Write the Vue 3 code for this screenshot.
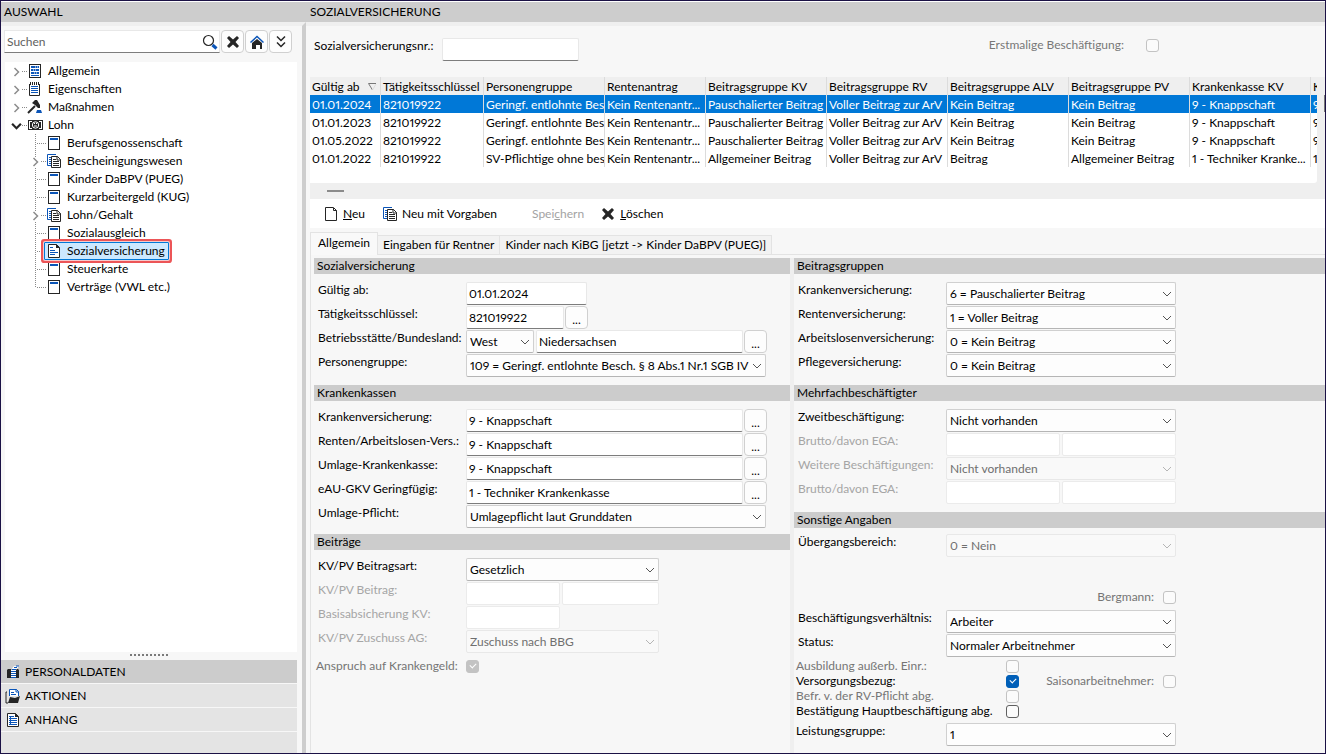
<template>
  <svg class="a-sprite" aria-hidden="true">
    <symbol id="i-page" viewBox="0 0 16 16">
      <rect x="2.5" y="1.5" width="11" height="13" fill="#fff" stroke="#252525" />
      <rect x="4" y="3" width="8" height="2" fill="#0b55b8" />
    </symbol>
    <symbol id="i-list" viewBox="0 0 16 16">
      <rect x="2.5" y="1.5" width="11" height="13" fill="#fff" stroke="#252525" />
      <path d="M4 4h8M4 7h8M4 10h8" stroke="#0b55b8" stroke-width="2" />
      <path d="M4 12.500h8" stroke="#0b55b8" />
      <path d="M8 4h1M10 4h1M6 7h1M8 7h1M7 10h1M9 10h1" stroke="#fff" />
    </symbol>
    <symbol id="i-notepad" viewBox="0 0 16 16">
      <path d="M2.500 3v11.500h10V3" fill="#fff" stroke="#252525" />
      <path d="M3.500 1v3M5.500 1v3M7.500 1v3M9.500 1v3M11.500 1v3" stroke="#252525" />
      <path d="M4 5.500h7M4 7.500h7M4 9.500h7M4 11.500h7" stroke="#0b55b8" />
    </symbol>
    <symbol id="i-gavel" viewBox="0 0 16 16">
      <path d="M1 14L8 7" stroke="#252525" stroke-width="2" />
      <path d="M5 4l3-3h2l3 5v3h-2L8 6z" fill="#252525" />
      <path d="M10 11h4l1 3H9z" fill="#0b55b8" />
    </symbol>
    <symbol id="i-money" viewBox="0 0 16 16">
      <rect x="1" y="3" width="15" height="10" fill="#252525" />
      <path d="M2 4h3v1H3v6h2v1H2zM15 4h-3v1h2v6h-2v1h3z" fill="#fff" />
      <circle cx="8.500" cy="8" r="3.200" fill="#252525" stroke="#fff" />
      <path d="M7 6.500h1M9 6.500h1M7 9h3" fill="none" stroke="#fff" />
    </symbol>
    <symbol id="i-copy" viewBox="0 0 16 16">
      <path d="M10 1.500H1.500v11H5" fill="#fff" stroke="#0b55b8" />
      <path d="M3 4.500h3M3 6.500h2M3 8.500h2M3 10.500h2" stroke="#0b55b8" />
      <path d="M5.500 3.500h6l3 3v8h-9z" fill="#fff" stroke="#252525" />
      <path d="M11 3v4h4M7 6.500h3M7 8.500h6M7 10.500h6M7 12.500h6" fill="none" stroke="#252525" />
    </symbol>
    <symbol id="i-doc" viewBox="0 0 16 16">
      <path d="M2.500 1.500h8l3 3v10h-11z" fill="#fff" stroke="#252525" />
      <path d="M10 1v4h4z" fill="#252525" />
      <path d="M4 4.500h3M4 7.500h5M4 9.500h8M4 11.500h5" stroke="#0b55b8" />
    </symbol>
    <symbol id="i-new" viewBox="0 0 16 16">
      <path d="M2.500 1.500h8l3 3v10h-11zM10.500 2v2.500h3" fill="#fff" stroke="#252525" />
    </symbol>
    <symbol id="i-attach" viewBox="0 0 16 16">
      <path d="M2.500 1.500h8l3 3v10h-11z" fill="#fff" stroke="#252525" />
      <path d="M10 1v4h4z" fill="#252525" />
      <path d="M5.500 4v9M4 4.500h5M4 6.500h8M4 8.500h8M4 10.500h8M4 12.500h8" stroke="#0b55b8" />
    </symbol>
    <symbol id="i-person" viewBox="0 0 16 16">
      <path d="M2 6l1-1h10l1 1v8H2z" fill="#252525" />
      <path d="M6 6l3-4h5l-3 4v8H6z" fill="#fff" />
      <path d="M9 3.500h3M11 2h3M7 5.500h4M6 7.500h5M6 9.500h5M6 11.500h5M6 13.500h5" stroke="#0b55b8" />
    </symbol>
    <symbol id="i-folder" viewBox="0 0 16 16">
      <path d="M2 4H1v11h2" fill="none" stroke="#252525" />
      <path d="M4.500 8V1.500h7l2 2V8" fill="#fff" stroke="#0b55b8" />
      <path d="M11 1v3h3M6 4.500h3M6 6.500h5" fill="none" stroke="#0b55b8" />
      <path d="M3 15l2-6 5 1 5-2-2 7z" fill="#252525" />
    </symbol>
    <symbol id="i-cross" viewBox="0 0 16 16">
      <path d="M2 4l2-2 4 3.500L12 2l2 2-3.500 4L14 12l-2 2-4-3.500L4 14l-2-2 3.500-4z" fill="#252525" />
    </symbol>
    <symbol id="i-search" viewBox="0 0 16 16">
      <circle cx="6.500" cy="6.500" r="5" fill="none" stroke="#252525" stroke-width="1.200" />
      <path d="M10.500 11l4 3.500" stroke="#0b55b8" stroke-width="3" />
    </symbol>
    <symbol id="i-home" viewBox="0 0 16 16">
      <path d="M3 9l5-4 5 4v6h-2v-4H7v4H3z" fill="#252525" />
      <path d="M1.500 8.500L8 2.500l6.500 6" fill="none" stroke="#0b55b8" stroke-width="1.500" />
      <path d="M8 11h2v4H8z" fill="#fff" />
    </symbol>
    <symbol id="i-down2" viewBox="0 0 16 16">
      <path d="M4 2.500L8 6.500l4-4M4 8.500l4 4 4-4" fill="none" stroke="#252525" stroke-width="1.500" />
    </symbol>
    <symbol id="i-right" viewBox="0 0 8 10">
      <path d="M2 1l4 4-4 4" fill="none" stroke="#8c8c8c" stroke-width="1.500" />
    </symbol>
    <symbol id="i-chevron" viewBox="0 0 10 6">
      <path d="M1 1l4 4 4-4" fill="none" stroke="currentColor" />
    </symbol>
  </svg>

  <div class="app">
    <header class="app__bar">
      <h2 class="app__title app__title--side">AUSWAHL</h2>
      <h1 class="app__title">SOZIALVERSICHERUNG</h1>
    </header>

    <div class="app__body">
      <aside class="side">
        <div class="side__search">
          <div class="side__box">
            <input v-model="query" type="text" class="side__input" placeholder="Suchen" aria-label="Suchen" />
            <svg class="icon side__glass"><use href="#i-search" /></svg>
          </div>
          <button class="btn" aria-label="Suche leeren" @click="query = ''"><svg class="icon"><use href="#i-cross" /></svg></button>
          <button class="btn" aria-label="Startseite"><svg class="icon"><use href="#i-home" /></svg></button>
          <button class="btn" aria-label="Alles aufklappen"><svg class="icon"><use href="#i-down2" /></svg></button>
        </div>

        <ul class="tree">
          <li
            v-for="(node, i) in tree"
            :key="node.label"
            class="tree__row"
            :class="{ 'tree__row--child': node.child, 'tree__row--last': i === tree.length - 1 }"
          >
            <span class="tree__branch">
              <svg v-if="node.state === 'closed'" class="tree__arrow"><use href="#i-right" /></svg>
              <svg v-if="node.state === 'open'" class="tree__arrow tree__arrow--open"><use href="#i-chevron" /></svg>
            </span>
            <button
              class="tree__item"
              :class="{ 'tree__item--active': node.label === selected }"
              @click="selected = node.label"
            >
              <svg class="icon"><use :href="'#i-' + node.icon" /></svg>
              {{ node.label }}
            </button>
          </li>
        </ul>

        <div class="side__grip"></div>
        <nav class="nav">
          <button v-for="item in nav" :key="item.label" class="nav__item" :class="{ 'nav__item--active': item.active }">
            <svg class="icon"><use :href="'#i-' + item.icon" /></svg>
            {{ item.label }}
          </button>
          <div class="nav__rest"></div>
        </nav>
      </aside>

      <main class="main">
        <div class="top">
          <label for="svnr" class="top__label">Sozialversicherungsnr.:</label>
          <input id="svnr" type="text" class="field w-137" />
          <label for="erst" class="top__first">Erstmalige Beschäftigung:</label>
          <input id="erst" type="checkbox" class="check" disabled />
        </div>

        <div class="list">
          <div class="list__view">
            <table class="grid">
              <colgroup>
                <col v-for="(c, i) in columns" :key="i" :class="'grid__col--' + c.size" />
              </colgroup>
              <thead>
                <tr>
                  <th v-for="(c, i) in columns" :key="i">
                    {{ c.title }}
                    <svg v-if="i === 0" class="grid__sort" viewBox="0 0 9 8">
                      <path d="M8 .5H.5L4.500 7" fill="none" stroke="#777" />
                      <path d="M8 1L4.500 7" stroke="#ddd" />
                    </svg>
                  </th>
                </tr>
              </thead>
              <tbody>
                <tr v-for="(row, r) in rows" :key="r" :class="{ 'grid__row--active': r === 0 }">
                  <td v-for="(cell, i) in row" :key="i">{{ cell }}</td>
                </tr>
              </tbody>
            </table>
          </div>
          <div class="list__vscroll"><span class="list__vthumb"></span></div>
        </div>
        <div class="list__hscroll"><span class="list__hthumb"></span></div>

        <div class="tools">
          <button class="tools__btn tools__btn--new"><svg class="icon"><use href="#i-new" /></svg><span><u>N</u>eu</span></button>
          <button class="tools__btn tools__btn--copy"><svg class="icon"><use href="#i-copy" /></svg><span>Neu mit Vorgaben</span></button>
          <button class="tools__btn tools__btn--save" disabled><span>Spei<u>c</u>hern</span></button>
          <button class="tools__btn"><svg class="icon"><use href="#i-cross" /></svg><span><u>L</u>öschen</span></button>
        </div>

        <div class="tabs" role="tablist">
          <button
            v-for="tab in tabs"
            :key="tab"
            role="tab"
            class="tabs__tab"
            :class="{ 'tabs__tab--active': tab === activeTab }"
            :aria-selected="tab === activeTab"
            @click="activeTab = tab"
          >{{ tab }}</button>
        </div>

        <div class="panel">
          <div v-for="(column, c) in form" :key="c" class="panel__col">
            <section v-for="(sec, s) in column" :key="sec.title" class="sec" :class="sec.mod && 'sec--' + sec.mod">
              <h3 class="sec__title">{{ sec.title }}</h3>
              <div class="sec__body">
                <div
                  v-for="(row, r) in sec.rows"
                  :key="r"
                  class="row"
                  :class="{ 'row--off': row.off, 'row--check': row.checks, 'row--lead': row.lead, 'row--gap': row.gap, 'row--flush': row.flush }"
                >
                  <template v-if="row.checks">
                    <template v-for="(k, n) in row.checks" :key="k.label">
                      <label
                        :for="`f${c}${s}${r}${n}`"
                        class="row__check"
                        :class="{ 'row__check--off': k.off, 'row__check--wide': k.wide, 'row__check--end': k.end, 'row__check--short': k.short }"
                      >{{ k.label }}</label>
                      <input :id="`f${c}${s}${r}${n}`" type="checkbox" class="check" :checked="k.on" :disabled="k.off" />
                    </template>
                  </template>
                  <template v-else>
                    <label :for="`f${c}${s}${r}0`" class="row__label">{{ row.label }}</label>
                    <template v-for="(f, n) in row.fields" :key="n">
                      <div v-if="f.type === 'select'" class="pick" :class="'w-' + f.w">
                        <select :id="`f${c}${s}${r}${n}`" class="pick__select" :disabled="row.off || f.off" :aria-label="row.label">
                          <option>{{ f.value }}</option>
                        </select>
                        <svg class="pick__arrow"><use href="#i-chevron" /></svg>
                      </div>
                      <button v-else-if="f.type === 'more'" class="btn btn--more">...</button>
                      <input
                        v-else
                        :id="`f${c}${s}${r}${n}`"
                        type="text"
                        class="field"
                        :class="'w-' + f.w"
                        :value="f.value"
                        :disabled="row.off"
                        :aria-label="row.label"
                      />
                    </template>
                  </template>
                </div>
              </div>
            </section>
          </div>
        </div>
      </main>
    </div>
  </div>
</template>

<script setup>
import { ref } from "vue";

const query = ref("");
const selected = ref("Sozialversicherung");

const tree = [
  { label: "Allgemein", icon: "list", state: "closed" },
  { label: "Eigenschaften", icon: "notepad", state: "closed" },
  { label: "Maßnahmen", icon: "gavel", state: "closed" },
  { label: "Lohn", icon: "money", state: "open" },
  { label: "Berufsgenossenschaft", icon: "page", child: true },
  { label: "Bescheinigungswesen", icon: "copy", child: true, state: "closed" },
  { label: "Kinder DaBPV (PUEG)", icon: "page", child: true },
  { label: "Kurzarbeitergeld (KUG)", icon: "page", child: true },
  { label: "Lohn/Gehalt", icon: "copy", child: true, state: "closed" },
  { label: "Sozialausgleich", icon: "page", child: true },
  { label: "Sozialversicherung", icon: "doc", child: true },
  { label: "Steuerkarte", icon: "page", child: true },
  { label: "Verträge (VWL etc.)", icon: "page", child: true },
];

const nav = [
  { label: "PERSONALDATEN", icon: "person", active: true },
  { label: "AKTIONEN", icon: "folder" },
  { label: "ANHANG", icon: "attach" },
];

const columns = [
  { title: "Gültig ab", size: "date" },
  { title: "Tätigkeitsschlüssel", size: "key" },
  { title: "Personengruppe", size: "base" },
  { title: "Rentenantrag", size: "short" },
  { title: "Beitragsgruppe KV", size: "base" },
  { title: "Beitragsgruppe RV", size: "base" },
  { title: "Beitragsgruppe ALV", size: "base" },
  { title: "Beitragsgruppe PV", size: "base" },
  { title: "Krankenkasse KV", size: "base" },
  { title: "K", size: "rest" },
];

const mini = ["Geringf. entlohnte Bes", "Kein Rentenantr...", "Pauschalierter Beitrag", "Voller Beitrag zur ArV", "Kein Beitrag", "Kein Beitrag", "9 - Knappschaft", "9"];
const rows = [
  ["01.01.2024", "821019922", ...mini],
  ["01.01.2023", "821019922", ...mini],
  ["01.05.2022", "821019922", ...mini],
  ["01.01.2022", "821019922", "SV-Pflichtige ohne bes", "Kein Rentenantr...", "Allgemeiner Beitrag", "Voller Beitrag zur ArV", "Beitrag", "Allgemeiner Beitrag", "1 - Techniker Kranke...", "1"],
];

const tabs = ["Allgemein", "Eingaben für Rentner", "Kinder nach KiBG [jetzt -> Kinder DaBPV (PUEG)]"];
const activeTab = ref(tabs[0]);

const text = (w, value = "") => ({ type: "text", w, value });
const select = (w, value, off = false) => ({ type: "select", w, value, off });
const more = { type: "more" };

const form = [
  [
    {
      title: "Sozialversicherung",
      rows: [
        { label: "Gültig ab:", fields: [text(121, "01.01.2024")] },
        { label: "Tätigkeitsschlüssel:", fields: [text(98, "821019922"), more] },
        { label: "Betriebsstätte/Bundesland:", fields: [select(68, "West"), text(207, "Niedersachsen"), more] },
        { label: "Personengruppe:", fields: [select(300, "109 = Geringf. entlohnte Besch. § 8 Abs.1 Nr.1 SGB IV")] },
      ],
    },
    {
      title: "Krankenkassen",
      mod: "tight",
      rows: [
        { label: "Krankenversicherung:", fields: [text(277, "9 - Knappschaft"), more] },
        { label: "Renten/Arbeitslosen-Vers.:", fields: [text(277, "9 - Knappschaft"), more] },
        { label: "Umlage-Krankenkasse:", fields: [text(277, "9 - Knappschaft"), more] },
        { label: "eAU-GKV Geringfügig:", fields: [text(277, "1 - Techniker Krankenkasse"), more] },
        { label: "Umlage-Pflicht:", fields: [select(300, "Umlagepflicht laut Grunddaten")] },
      ],
    },
    {
      title: "Beiträge",
      rows: [
        { label: "KV/PV Beitragsart:", fields: [select(193, "Gesetzlich")] },
        { label: "KV/PV Beitrag:", off: true, fields: [text(94), text(97)] },
        { label: "Basisabsicherung KV:", off: true, fields: [text(94)] },
        { label: "KV/PV Zuschuss AG:", off: true, fields: [select(193, "Zuschuss nach BBG")] },
        { gap: true, checks: [{ label: "Anspruch auf Krankengeld:", on: true, off: true, short: true }] },
      ],
    },
  ],
  [
    {
      title: "Beitragsgruppen",
      rows: [
        { label: "Krankenversicherung:", fields: [select(230, "6 = Pauschalierter Beitrag")] },
        { label: "Rentenversicherung:", fields: [select(230, "1 = Voller Beitrag")] },
        { label: "Arbeitslosenversicherung:", fields: [select(230, "0 = Kein Beitrag")] },
        { label: "Pflegeversicherung:", fields: [select(230, "0 = Kein Beitrag")] },
      ],
    },
    {
      title: "Mehrfachbeschäftigter",
      rows: [
        { label: "Zweitbeschäftigung:", fields: [select(230, "Nicht vorhanden")] },
        { label: "Brutto/davon EGA:", off: true, fields: [text(114), text(114)] },
        { label: "Weitere Beschäftigungen:", off: true, fields: [select(230, "Nicht vorhanden")] },
        { label: "Brutto/davon EGA:", off: true, fields: [text(114), text(114)] },
      ],
    },
    {
      title: "Sonstige Angaben",
      mod: "misc",
      rows: [
        { label: "Übergangsbereich:", fields: [select(230, "0 = Nein", true)] },
        { gap: true, checks: [{ label: "Bergmann:", off: true, end: true }] },
        { label: "Beschäftigungsverhältnis:", gap: true, fields: [select(230, "Arbeiter")] },
        { label: "Status:", fields: [select(230, "Normaler Arbeitnehmer")] },
        { lead: true, checks: [{ label: "Ausbildung außerb. Einr.:", off: true, wide: true }] },
        { checks: [{ label: "Versorgungsbezug:", on: true, wide: true }, { label: "Saisonarbeitnehmer:", off: true, end: true }] },
        { checks: [{ label: "Befr. v. der RV-Pflicht abg.", off: true, wide: true }] },
        { checks: [{ label: "Bestätigung Hauptbeschäftigung abg.", wide: true }] },
        { label: "Leistungsgruppe:", flush: true, fields: [select(230, "1")] },
      ],
    },
  ],
];
</script>

<style>
body {
  background: #f7f7f7;
}
</style>

<style scoped>
.a-sprite {
  position: absolute;
  width: 0;
  height: 0;
}

.app,
.app *,
.app *::before,
.app *::after {
  box-sizing: border-box;
}

.app {
  display: flex;
  flex-direction: column;
  min-height: 100vh;
  border: 1px solid #1b1145;
  background: #f7f7f7;
  color: #000;
  font-family: Lato, "Open Sans", sans-serif;
  font-size: 12px;
  font-variant-numeric: proportional-nums;
  line-height: 16px;
}

button,
input,
select {
  margin: 0;
  font: inherit;
  font-variant-numeric: inherit;
  color: inherit;
}

.icon {
  flex: none;
  width: 16px;
  height: 16px;
}

/* KOPFZEILE */
.app__bar {
  display: flex;
  align-items: center;
  height: 21px;
  border-top: 1px solid #fff;
  background: #cdcdcd;
}

.app__title {
  margin: 0;
  padding-left: 4px;
  font-size: 12px;
  font-weight: 400;
}

.app__title--side {
  width: 305px;
  padding-left: 3px;
}

.app__body {
  display: flex;
  flex: 1;
}

/* SEITENLEISTE */
.side {
  display: flex;
  flex-direction: column;
  flex: none;
  width: 305px;
  padding-right: 5px;
  border-right: 4px solid #cdcdcd;
  border-top: 4px solid #efefef;
}

.side__search {
  display: flex;
  gap: 1px;
  padding: 4px 5px 9px 3px;
}

.side__box {
  display: flex;
  align-items: center;
  flex: 1;
  height: 23px;
  padding-right: 1px;
  border: 1px solid #e8e8e8;
  border-bottom-color: #7d7d7d;
  background: #fff;
}

.side__input {
  flex: 1;
  min-width: 0;
  padding: 0 2px;
  border: 0;
  outline: 0;
  background: none;
}

.side__input::placeholder {
  color: #5f5f5f;
}

.btn {
  display: flex;
  align-items: center;
  justify-content: center;
  flex: none;
  width: 23px;
  height: 23px;
  padding: 0;
  border: 1px solid #d0d0d0;
  border-radius: 4px;
  background: #fdfdfd;
}

.btn--more {
  padding-top: 4px;
}

.tree {
  flex: 1;
  margin: 0 0 0 4px;
  padding: 0;
  background: #fff;
  list-style: none;
}

.tree__row {
  display: flex;
  height: 18px;
  padding-left: 3px;
}

.tree__row--child {
  padding-left: 22px;
}

.tree__branch {
  position: relative;
  display: flex;
  align-items: center;
  width: 17px;
  padding-left: 3px;
}

.tree__row--child .tree__branch::before {
  content: "";
  position: absolute;
  left: 8px;
  top: 0;
  width: 1px;
  height: 100%;
  background: repeating-linear-gradient(#8a8a8a 0 1px, transparent 1px 2px);
}

.tree__row--last .tree__branch::before {
  height: 50%;
}

.tree__branch::after {
  content: "";
  position: absolute;
  left: 9px;
  right: -3px;
  top: 9px;
  height: 1px;
  background: repeating-linear-gradient(90deg, transparent 0 1px, #8a8a8a 1px 2px);
}

.tree__arrow {
  position: relative;
  z-index: 1;
  width: 11px;
  height: 10px;
  margin-top: 2px;
  background: #fff;
}

.tree__arrow--open {
  color: #252525;
  stroke-width: 2;
}

.tree__item {
  display: flex;
  align-items: center;
  gap: 5px;
  padding: 0 3px 0 1px;
  border: 1px solid transparent;
  background: none;
  white-space: nowrap;
}

.tree__item--active {
  position: relative;
  z-index: 2;
  border-color: #0078d7;
  border-radius: 1px;
  background: #cce8ff;
  box-shadow: 0 0 0 1px #f6c9cc, 0 0 0 3px #ec5557;
}

.side__grip {
  width: 39px;
  height: 2px;
  margin: 2px auto 4px;
  background: repeating-linear-gradient(90deg, #7a7a7a 0 2px, transparent 2px 4px);
}

.nav {
  display: flex;
  flex-direction: column;
  gap: 1px;
}

.nav__item {
  display: flex;
  align-items: center;
  gap: 4px;
  height: 23px;
  padding: 0 4px;
  border: 0;
  background: #e4e4e4;
}

.nav__item--active {
  background: #cccccc;
}

.nav__rest {
  height: 21px;
  background: #e4e4e4;
}

/* HAUPTBEREICH */
.main {
  display: flex;
  flex-direction: column;
  flex: 1;
  min-width: 0;
  padding-left: 4px;
  border-top: 4px solid #efefef;
}

.top {
  display: flex;
  align-items: center;
  height: 51px;
  padding: 0 166px 5px 4px;
}

.top__label {
  width: 128px;
  padding-bottom: 6px;
  white-space: nowrap;
}

.top__first {
  margin-left: auto;
  padding: 0 22px 8px 0;
  color: #777;
}

.top__first + .check {
  margin-bottom: 8px;
}

.field {
  flex: none;
  height: 23px;
  padding: 0 2px;
  border: 1px solid #e8e8e8;
  border-bottom-color: #7d7d7d;
  border-radius: 2px;
  background: #fff;
}

.field:disabled {
  border-color: #ebebeb;
}

.list {
  display: flex;
  background: #efefef;
}

.list__view {
  flex: 1;
  min-width: 0;
  height: 106px;
  overflow: hidden;
  border-radius: 0 0 3px 0;
  background: #fff;
}

.list__vscroll {
  width: 8px;
  padding-top: 18px;
}

.list__vthumb {
  display: block;
  width: 1px;
  height: 17px;
  margin-left: auto;
  background: #777;
}

.list__hscroll {
  height: 16px;
  padding: 7px 17px;
  background: #efefef;
}

.list__hthumb {
  display: block;
  width: 17px;
  height: 2px;
  background: #8b8b8b;
}

.grid {
  width: 100%;
  table-layout: fixed;
  border-collapse: separate;
  border-spacing: 0;
}

.grid__col--date {
  width: 71px;
}

.grid__col--key {
  width: 103px;
}

.grid__col--base {
  width: 121px;
}

.grid__col--short {
  width: 101px;
}

.grid th,
.grid td {
  height: 18px;
  padding: 1px 0 0 2px;
  overflow: hidden;
  border-right: 1px solid #dcdcdc;
  font-weight: 400;
  text-align: left;
  white-space: nowrap;
}

.grid th:last-child,
.grid td:last-child {
  border-right: 0;
}

.grid thead {
  background: #efefef;
}

.grid__sort {
  width: 9px;
  height: 8px;
  margin-left: 5px;
}

.grid__row--active {
  background: #0078d7;
  color: #fff;
}

.tools {
  display: flex;
  align-items: center;
  height: 29px;
  padding-left: 13px;
  background: #fff;
}

.tools__btn {
  display: flex;
  align-items: center;
  gap: 4px;
  padding: 0;
  border: 0;
  background: none;
}

.tools__btn--new {
  margin-right: 17px;
}

.tools__btn--copy {
  margin-right: 35px;
}

.tools__btn--save {
  margin-right: 16px;
  color: #a3a3a3;
}

/* REITER */
.tabs {
  display: flex;
  align-items: flex-end;
  height: 27px;
  border-bottom: 1px solid #e3e3e3;
}

.tabs__tab {
  height: 19px;
  padding: 0 5px;
  border: 1px solid #e3e3e3;
  border-width: 1px 1px 0 0;
  background: #f2f2f2;
  white-space: nowrap;
}

.tabs__tab--active {
  height: 23px;
  margin-bottom: -1px;
  padding: 0 7px 2px;
  border-width: 1px 1px 0;
  background: #f9f9f9;
}

.panel {
  display: grid;
  grid-template-columns: minmax(0, 476fr) minmax(0, 531fr);
  gap: 4px;
  flex: 1;
  padding: 3px 0 0 3px;
  border-left: 1px solid #e3e3e3;
}

.panel__col + .panel__col {
  box-shadow: -4px 0 0 #efefef;
}

.sec__title {
  height: 16px;
  margin: 0;
  padding-left: 3px;
  background: #cccccc;
  font-size: 12px;
  font-weight: 400;
}

.sec__body {
  display: flex;
  flex-direction: column;
  gap: 1px;
  padding: 8px 0 8px 4px;
}

.sec--tight .sec__body {
  padding-bottom: 6px;
}

.sec--misc .sec__body {
  width: 382px;
  padding-top: 6px;
  padding-bottom: 4px;
}

.row {
  display: flex;
  gap: 2px;
  min-height: 23px;
}

.row__label {
  flex: none;
  width: 146px;
  white-space: nowrap;
}

.row--off .row__label {
  color: #a5a5a5;
}

.row--off {
  color: #6f6f6f;
}

.row--check {
  align-items: center;
  gap: 0;
  min-height: 14px;
  height: 14px;
  margin-left: -2px;
}

.row--lead {
  margin-top: 1px;
}

.row--flush {
  margin-top: 4px;
  margin-left: -2px;
}

.row--flush .row__label {
  width: 148px;
}

.row--gap {
  margin-top: 5px;
}

.sec--misc .row--check.row--gap {
  margin-top: 32px;
}

.row__check {
  white-space: nowrap;
}

.row__check--off {
  color: #757575;
}

.row__check--short {
  width: 150px;
}

.row__check--wide {
  width: 210px;
}

.row__check--end {
  margin-left: auto;
  padding-right: 9px;
}

.row .btn {
  margin-left: -1px;
}

.check {
  position: relative;
  flex: none;
  width: 13px;
  height: 13px;
  border: 1px solid #606060;
  border-radius: 3px;
  background: #fbfbfb;
  appearance: none;
}

.check:disabled {
  border-color: #c3c3c3;
}

.check:checked {
  border-color: #005fb8;
  background: #005fb8;
}

.check:checked:disabled {
  border-color: #c3c3c3;
  background: #c3c3c3;
}

.check:checked::after {
  content: "";
  position: absolute;
  left: 3px;
  top: 2px;
  width: 6px;
  height: 4px;
  border: solid #fff;
  border-width: 0 0 1px 1px;
  transform: rotate(-45deg);
}

.pick {
  position: relative;
  flex: none;
}

.pick__select {
  width: 100%;
  height: 23px;
  padding: 0 12px 0 3px;
  border: 1px solid #d0d0d0;
  border-bottom-color: #b5b5b5;
  border-radius: 2px;
  background: #fdfdfd;
  appearance: none;
}

.pick__select:disabled {
  border-color: #e8e8e8;
  background: #f9f9f9;
  color: #6f6f6f;
  opacity: 1;
}

.pick__arrow {
  position: absolute;
  right: 4px;
  top: 9px;
  width: 10px;
  height: 6px;
  color: #555;
  pointer-events: none;
}

.pick__select:disabled + .pick__arrow {
  color: #b5b5b5;
}

.w-68 {
  width: 68px;
}

.w-94 {
  width: 94px;
}

.w-97 {
  width: 97px;
}

.w-98 {
  width: 98px;
}

.w-114 {
  width: 114px;
}

.w-121 {
  width: 121px;
}

.w-137 {
  width: 137px;
}

.w-193 {
  width: 193px;
}

.w-207 {
  width: 207px;
}

.w-230 {
  width: 230px;
}

.w-277 {
  width: 277px;
}

.w-300 {
  width: 300px;
}
</style>
